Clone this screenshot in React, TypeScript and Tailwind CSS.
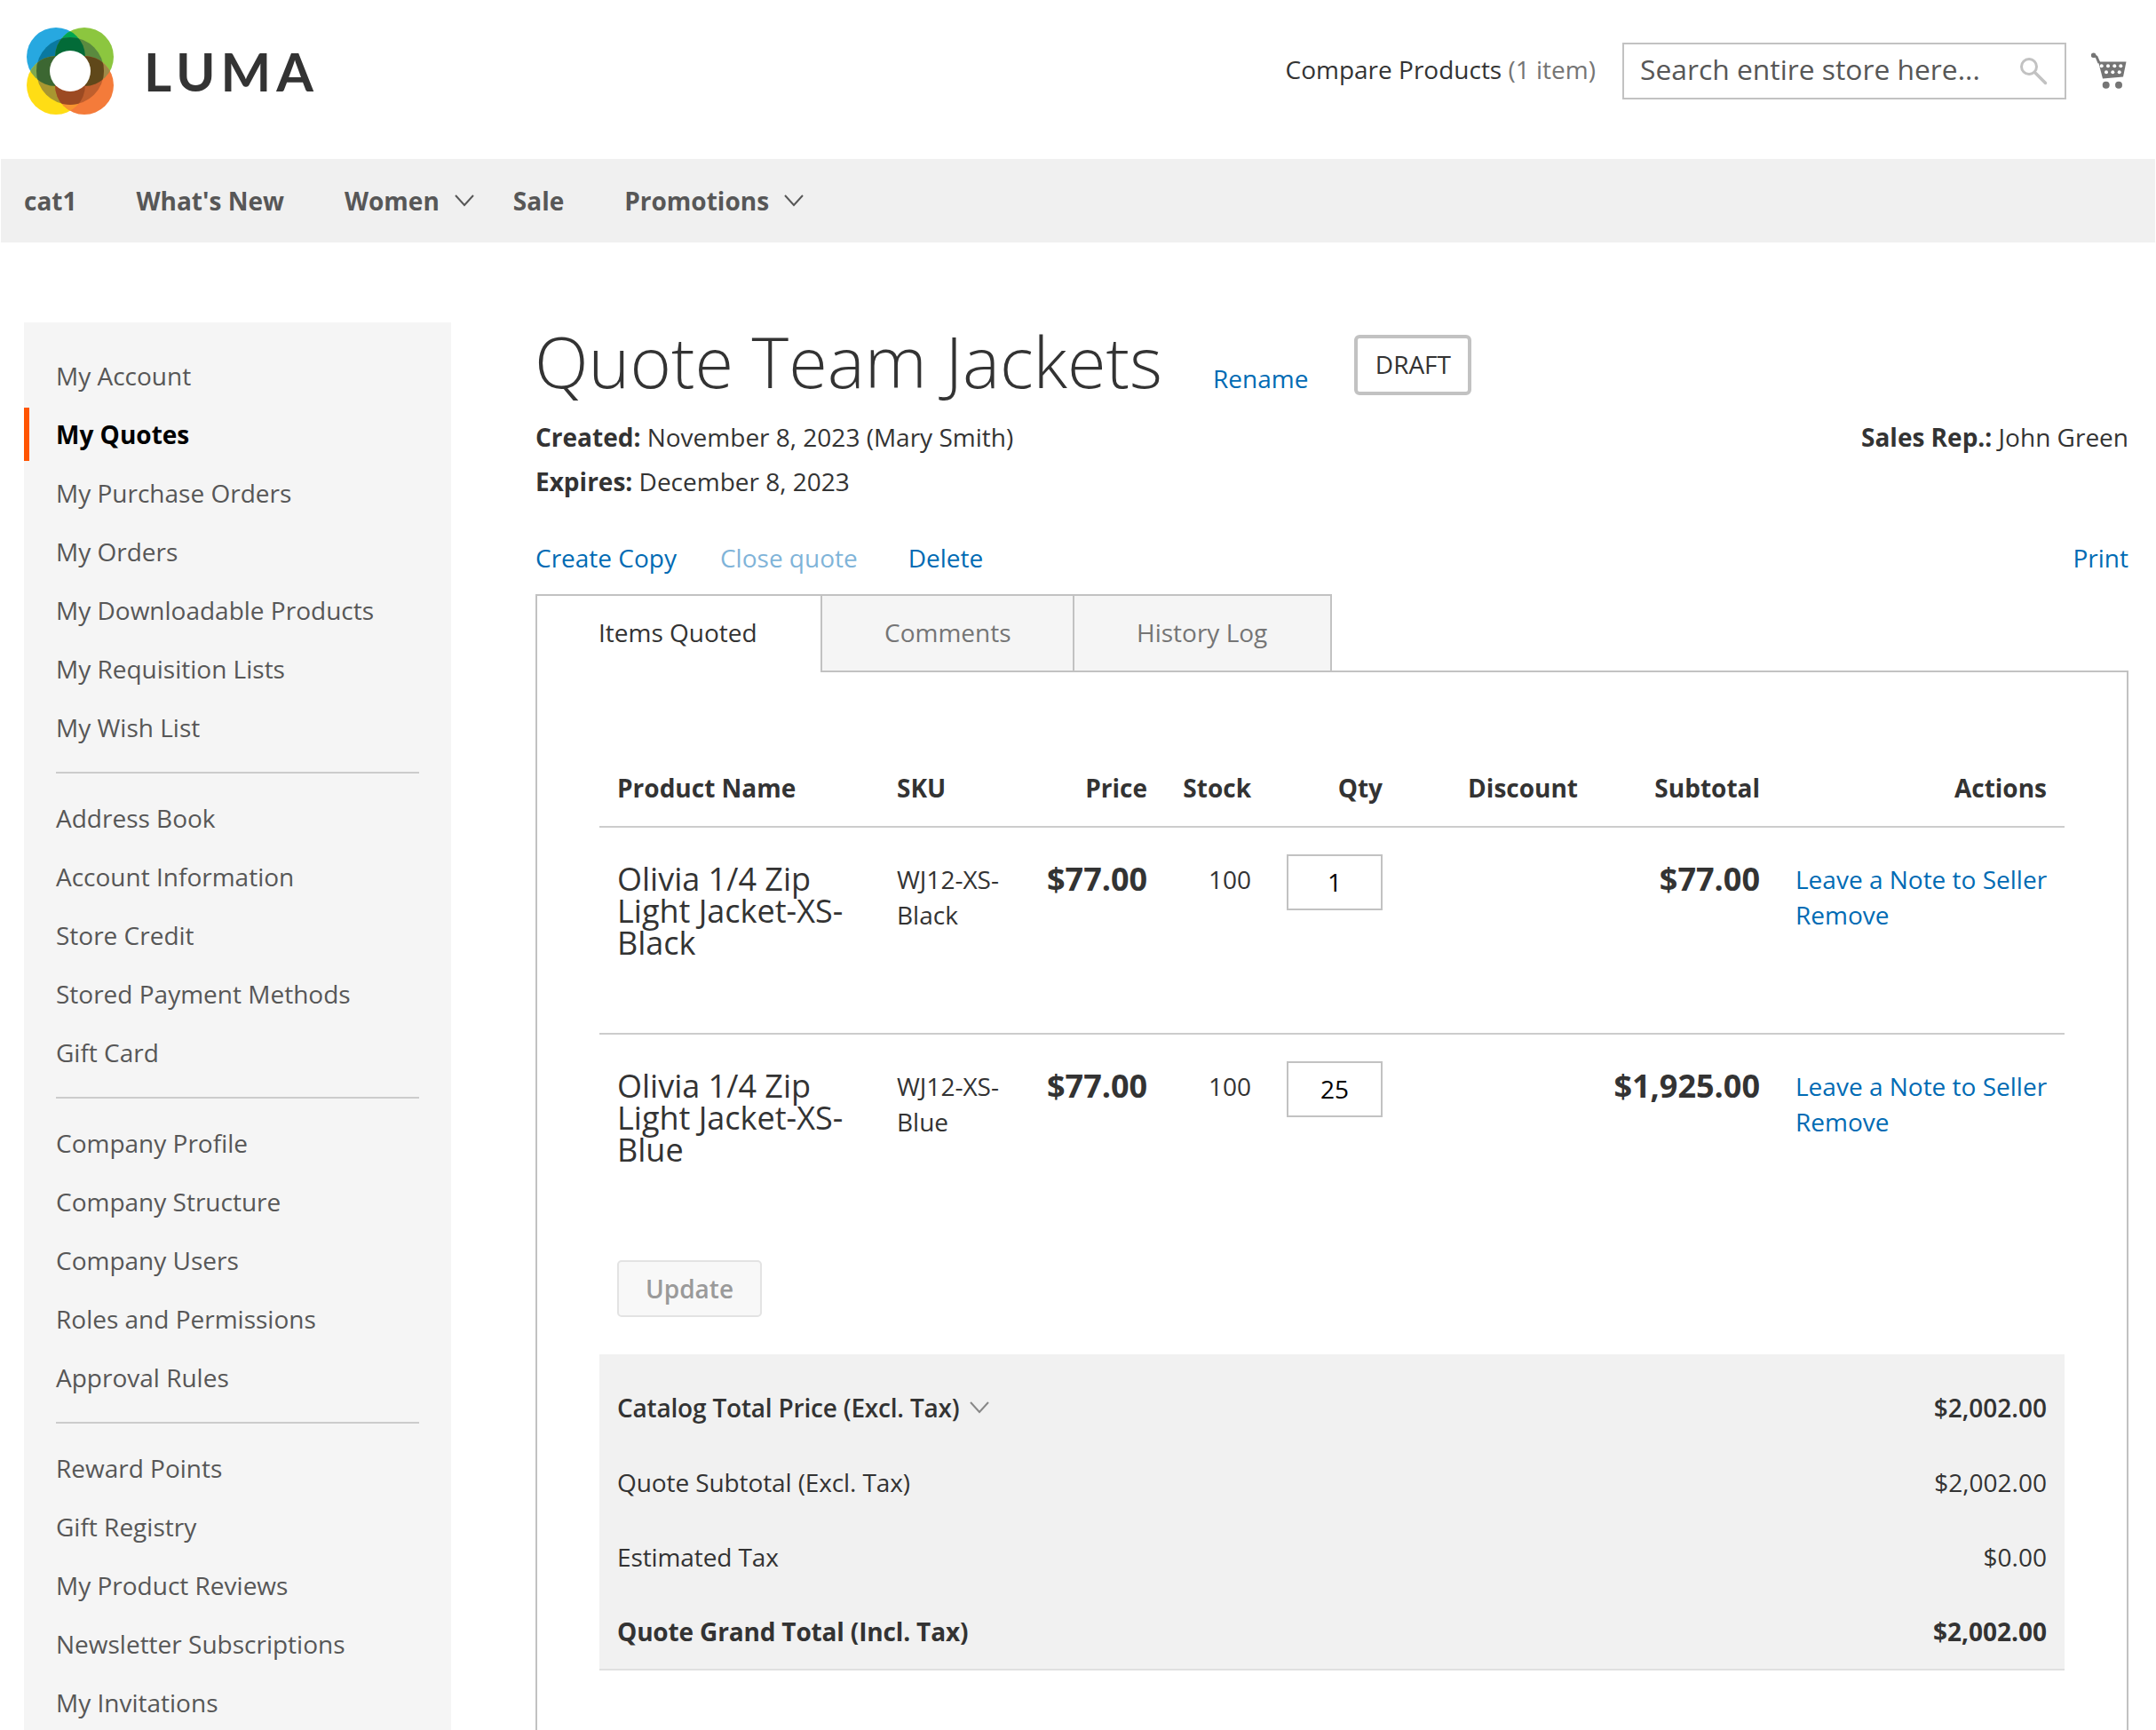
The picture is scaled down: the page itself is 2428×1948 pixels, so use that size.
const sidebarGroups = [
  ['My Account', 'My Quotes', 'My Purchase Orders', 'My Orders', 'My Downloadable Products', 'My Requisition Lists', 'My Wish List'],
  ['Address Book', 'Account Information', 'Store Credit', 'Stored Payment Methods', 'Gift Card'],
  ['Company Profile', 'Company Structure', 'Company Users', 'Roles and Permissions', 'Approval Rules'],
  ['Reward Points', 'Gift Registry', 'My Product Reviews', 'Newsletter Subscriptions', 'My Invitations'],
];

const quoteItems = [
  { name: 'Olivia 1/4 Zip Light Jacket-XS-Black', sku: 'WJ12-XS-Black', qty: '1', subtotal: '$77.00' },
  { name: 'Olivia 1/4 Zip Light Jacket-XS-Blue', sku: 'WJ12-XS-Blue', qty: '25', subtotal: '$1,925.00' },
];

function Logo() {
  const quads = [
    { id: 'b', cx: 33, cy: 33, base: '#27a8e0', inner: '#0a79a0' },
    { id: 'g', cx: 65, cy: 33, base: '#8cc63f', inner: '#5a8a3f' },
    { id: 'y', cx: 33, cy: 65, base: '#ffdd15', inner: '#a89630' },
    { id: 'o', cx: 65, cy: 65, base: '#f47b3a', inner: '#c05f2d' },
  ];
  const lenses = [
    { a: 'b', b: 'g', tip: '#00a650', dark: '#036b38' },
    { a: 'b', b: 'y', tip: '#7fa84e', dark: '#3c6732' },
    { a: 'g', b: 'o', tip: '#a08a48', dark: '#60481a' },
    { a: 'y', b: 'o', tip: '#f7942f', dark: '#9c4a22' },
  ];
  return (
    <svg width="98" height="98" viewBox="0 0 98 98">
      <defs>
        {quads.map((q) => (
          <clipPath key={q.id} id={`clip-${q.id}`}>
            <circle cx={q.cx} cy={q.cy} r="33" />
          </clipPath>
        ))}
        <clipPath id="clip-center">
          <circle cx="49" cy="49" r="38" />
        </clipPath>
      </defs>
      {quads.map((q) => (
        <circle key={q.id} cx={q.cx} cy={q.cy} r="33" fill={q.base} />
      ))}
      {lenses.map((l) => (
        <g key={l.a + l.b} clipPath={`url(#clip-${l.a})`}>
          <circle
            cx={quads.find((q) => q.id === l.b)!.cx}
            cy={quads.find((q) => q.id === l.b)!.cy}
            r="33"
            fill={l.tip}
          />
        </g>
      ))}
      <g clipPath="url(#clip-center)">
        {quads.map((q) => (
          <circle key={q.id} cx={q.cx} cy={q.cy} r="33" fill={q.inner} />
        ))}
        {lenses.map((l) => (
          <g key={l.a + l.b} clipPath={`url(#clip-${l.a})`}>
            <circle
              cx={quads.find((q) => q.id === l.b)!.cx}
              cy={quads.find((q) => q.id === l.b)!.cy}
              r="33"
              fill={l.dark}
            />
          </g>
        ))}
      </g>
      <circle cx="49" cy="49" r="23" fill="#fff" />
    </svg>
  );
}

function Chevron({ className = 'text-[#575757]' }: { className?: string }) {
  return (
    <svg width="22" height="14" viewBox="0 0 22 14" className={className}>
      <polyline points="1,1 11,12 21,1" fill="none" stroke="currentColor" strokeWidth="2" />
    </svg>
  );
}

function SearchIcon() {
  return (
    <svg width="32" height="32" viewBox="0 0 32 32" className="absolute right-[20px] top-[16px] text-[#c2c2c2]">
      <circle cx="10" cy="11" r="8.5" fill="none" stroke="currentColor" strokeWidth="3" />
      <line x1="16.5" y1="17.5" x2="28.5" y2="29.5" stroke="currentColor" strokeWidth="3.5" strokeLinecap="round" />
    </svg>
  );
}

function CartIcon() {
  const topDots = [11.7, 19, 26.3, 33.3];
  const bottomDots = [17, 24.3, 31.7];
  return (
    <svg width="40" height="42" viewBox="0 0 40 42" className="text-[#757575]">
      <circle cx="2.6" cy="3.2" r="2.8" fill="#757575" />
      <path d="M3 3.5 L6 5 L9 12" fill="none" stroke="currentColor" strokeWidth="3" />
      <path fill="currentColor" d="M8 10.5 H39.5 L36 27.5 L13 29.5 Z" />
      {topDots.map((x) => (
        <circle key={x} cx={x} cy="15.3" r="2" fill="#fff" />
      ))}
      {bottomDots.map((x) => (
        <circle key={x} cx={x} cy="22.3" r="2" fill="#fff" />
      ))}
      <circle cx="16.7" cy="36.7" r="4" fill="currentColor" />
      <circle cx="31" cy="36.7" r="4" fill="currentColor" />
    </svg>
  );
}

function Sidebar() {
  return (
    <aside className="ml-[27px] w-[481px] shrink-0 bg-[#f5f5f5] pt-[30px]">
      {sidebarGroups.map((group, i) => (
        <div key={i}>
          {i > 0 && <div className="mx-[36px] mb-[20px] mt-[20px] h-[2px] bg-[#cccccc]" />}
          {group.map((item) =>
            item === 'My Quotes' ? (
              <div key={item} className="mb-[6px] flex h-[60px] items-center border-l-[6px] border-[#ff5501] pb-[1px] pl-[30px] font-bold text-black">
                {item}
              </div>
            ) : (
              <div key={item} className="mb-[6px] flex h-[60px] items-center pb-[1px] pl-[36px] text-[#575757]">
                {item}
              </div>
            ),
          )}
        </div>
      ))}
    </aside>
  );
}

function ItemsTable() {
  return (
    <table className="w-[1650px] table-fixed border-separate border-spacing-0 text-[#333333]">
      <colgroup>
        <col className="w-[315px]" />
        <col className="w-[169px]" />
        <col className="w-[153px]" />
        <col className="w-[117px]" />
        <col className="w-[148px]" />
        <col className="w-[220px]" />
        <col className="w-[205px]" />
        <col className="w-[323px]" />
      </colgroup>
      <thead>
        <tr>
          <th className="h-[90px] border-b-2 border-[#cccccc] px-[20px] pt-[2px] text-left font-bold">Product Name</th>
          <th className="border-b-2 border-[#cccccc] px-[20px] pt-[2px] text-left font-bold">SKU</th>
          <th className="border-b-2 border-[#cccccc] px-[20px] pt-[2px] text-right font-bold">Price</th>
          <th className="border-b-2 border-[#cccccc] px-[20px] pt-[2px] text-right font-bold">Stock</th>
          <th className="border-b-2 border-[#cccccc] px-[20px] pt-[2px] text-right font-bold">Qty</th>
          <th className="border-b-2 border-[#cccccc] px-[20px] pt-[2px] text-right font-bold">Discount</th>
          <th className="border-b-2 border-[#cccccc] px-[20px] pt-[2px] text-right font-bold">Subtotal</th>
          <th className="border-b-2 border-[#cccccc] px-[20px] pt-[2px] text-right font-bold">Actions</th>
        </tr>
      </thead>
      <tbody>
        {quoteItems.map((item, i) => {
          const rule = i === 0 ? 'border-b-2 border-[#cccccc]' : '';
          return (
            <tr key={item.sku} className={i === 0 ? 'h-[233px]' : 'h-[230px]'}>
              <td className={`${rule} px-[20px] pt-[40px] align-top text-[36px] leading-[36px]`}>{item.name}</td>
              <td className={`${rule} px-[20px] pt-[38px] align-top leading-[40px]`}>{item.sku}</td>
              <td className={`${rule} px-[20px] pt-[40px] text-right align-top text-[36px] font-bold leading-[36px]`}>$77.00</td>
              <td className={`${rule} px-[20px] pt-[38px] text-right align-top leading-[40px]`}>100</td>
              <td className={`${rule} px-[20px] pt-[30px] align-top`}>
                <div className="ml-auto flex h-[63px] w-[108px] items-center justify-center border-2 border-[#c2c2c2] pb-[1px] text-black">
                  {item.qty}
                </div>
              </td>
              <td className={rule} />
              <td className={`${rule} px-[20px] pt-[40px] text-right align-top text-[36px] font-bold leading-[36px]`}>{item.subtotal}</td>
              <td className={`${rule} whitespace-nowrap px-[20px] pt-[38px] align-top leading-[40px] text-[#006bb4]`}>
                <a href="#" className="block">Leave a Note to Seller</a>
                <a href="#" className="block">Remove</a>
              </td>
            </tr>
          );
        })}
      </tbody>
    </table>
  );
}

function Totals() {
  return (
    <div className="mt-[42px] w-[1650px] border-b-2 border-[#e0e0e0] bg-[#f1f1f1] px-[20px] pt-[18px] text-[#333333]">
      <div className="flex h-[84px] items-center justify-between font-semibold">
        <span className="flex items-center gap-[12px] tracking-[-0.2px]">
          Catalog Total Price (Excl. Tax)
          <Chevron className="text-[#888888]" />
        </span>
        <span>$2,002.00</span>
      </div>
      <div className="flex h-[84px] items-center justify-between">
        <span className="tracking-[-0.1px]">Quote Subtotal (Excl. Tax)</span>
        <span>$2,002.00</span>
      </div>
      <div className="flex h-[84px] items-center justify-between">
        <span className="tracking-[-0.1px]">Estimated Tax</span>
        <span>$0.00</span>
      </div>
      <div className="flex h-[84px] items-center justify-between font-bold">
        <span className="tracking-[-0.16px]">Quote Grand Total (Incl. Tax)</span>
        <span>$2,002.00</span>
      </div>
    </div>
  );
}

export default function App() {
  return (
    <div className="h-screen overflow-hidden bg-white font-['Open_Sans',sans-serif] text-[28px] text-[#333333]">
      <header className="flex h-[179px] items-center pb-[20px] pl-[30px] pr-[33px]">
        <Logo />
        <span className="ml-[34px] font-['Lato',sans-serif] text-[60px] font-bold leading-none tracking-[6px] text-[#333333]">LUMA</span>
        <div className="ml-auto pb-[4px]">
          Compare Products <span className="text-[#757575]">(1 item)</span>
        </div>
        <div className="relative ml-[30px]">
          <input
            readOnly
            placeholder="Search entire store here..."
            className="h-[64px] w-[500px] border-2 border-[#c2c2c2] pb-[4px] pl-[18px] pr-[70px] text-[31.8px] text-[#575757] placeholder:text-[#575757]"
          />
          <SearchIcon />
        </div>
        <div className="ml-[28px]">
          <CartIcon />
        </div>
      </header>

      <nav className="mx-px flex h-[94px] items-center bg-[#f0f0f0] pl-[26px] font-bold text-[#575757]">
        <span className="mr-[67px]">cat1</span>
        <span className="mr-[68px]">What's New</span>
        <span>Women</span>
        <span className="ml-[17px] mr-[44px]"><Chevron /></span>
        <span className="mr-[68px]">Sale</span>
        <span>Promotions</span>
        <span className="ml-[17px]"><Chevron /></span>
      </nav>

      <div className="flex pt-[90px]">
        <Sidebar />
        <main className="ml-[95px] w-[1794px]">
          <div className="flex h-[92px] items-center">
            <h1 className="-ml-px pb-[6px] text-[79.3px] font-light leading-[92px] text-[#333333]">Quote Team Jackets</h1>
            <a href="#" className="ml-[57px] mt-[33px] text-[#006bb4]">Rename</a>
            <span className="ml-[52px] mt-[4px] flex h-[68px] w-[132px] items-center justify-center rounded-[6px] border-[4px] border-[#c2c2c2] pb-[2px]">DRAFT</span>
          </div>

          <div className="mt-[13px] flex h-[50px] items-center justify-between pb-[2px]">
            <span><b className="font-bold">Created:</b> November 8, 2023 (Mary Smith)</span>
            <span><b className="font-bold">Sales Rep.:</b> John Green</span>
          </div>
          <div className="flex h-[50px] items-center pb-[2px]">
            <span><b className="font-bold">Expires:</b> December 8, 2023</span>
          </div>

          <div className="mt-[41px] flex h-[40px] items-center pb-[2px] text-[#006bb4]">
            <a href="#">Create Copy</a>
            <a href="#" className="ml-[49px] opacity-50">Close quote</a>
            <a href="#" className="ml-[57px]">Delete</a>
            <a href="#" className="ml-auto">Print</a>
          </div>

          <div className="relative z-10 mt-[20px] -mb-[2px] flex">
            <div className="flex h-[88px] w-[323px] items-center border-x-2 border-t-2 border-[#c2c2c2] bg-white pb-[5px] pl-[69px]">Items Quoted</div>
            <div className="-ml-[2px] flex h-[88px] w-[286px] items-center border-2 border-[#c2c2c2] bg-[#f5f5f5] pb-[3px] pl-[70px] text-[#757575]">Comments</div>
            <div className="-ml-[2px] flex h-[88px] w-[292px] items-center border-2 border-[#c2c2c2] bg-[#f5f5f5] pb-[3px] pl-[70px] text-[#757575]">History Log</div>
          </div>

          <section className="border-x-2 border-t-2 border-[#c2c2c2] px-[70px] pb-[200px] pt-[85px]">
            <ItemsTable />
            <button className="ml-[20px] mt-[24px] block h-[64px] w-[163px] rounded-[5px] border-2 border-[#e3e3e3] bg-[#f8f8f8] font-semibold text-[#9a9a9a]">
              Update
            </button>
            <Totals />
          </section>
        </main>
      </div>
    </div>
  );
}
